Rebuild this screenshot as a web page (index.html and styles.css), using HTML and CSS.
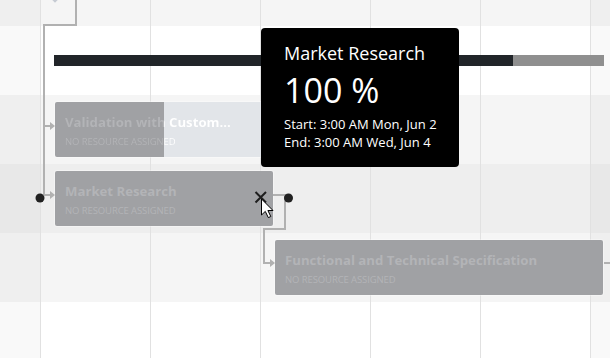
FILE: index.html
```html
<!DOCTYPE html>
<html>
<head>
<meta charset="utf-8">
<link rel="stylesheet" href="styles.css">
</head>
<body>
<div class="gantt">
  <div class="rows">
    <div class="row r-alt r-top"></div>
    <div class="row"></div>
    <div class="row r-alt"></div>
    <div class="row r-hover"></div>
    <div class="row r-alt"></div>
    <div class="row r-last"></div>
  </div>
  <div class="cols">
    <div class="col weekend w-left"></div>
    <div class="col"></div>
    <div class="col"></div>
    <div class="col"></div>
    <div class="col"></div>
    <div class="col"></div>
    <div class="col weekend w-right"></div>
  </div>

  <div class="milestone"></div>

  <div class="summary"><div class="summary-done" style="width:459px"></div></div>

  <div class="task t-validation partial" style="--p:109px">
    <div class="task-text">
      <div class="title">Validation with Custom...</div>
      <div class="res">NO RESOURCE ASSIGNED</div>
    </div>
  </div>

  <div class="task t-market">
    <div class="task-text">
      <div class="title">Market Research</div>
      <div class="res">NO RESOURCE ASSIGNED</div>
    </div>
  </div>

  <div class="task t-func">
    <div class="task-text">
      <div class="title">Functional and Technical Specification</div>
      <div class="res">NO RESOURCE ASSIGNED</div>
    </div>
  </div>

  <svg class="links" width="610" height="358" viewBox="0 0 610 358">
    <g fill="none" stroke="#b1b1b1" stroke-width="2">
      <path d="M76 0 V25 H44 V195"/>
      <path d="M44 126 H51"/>
      <path d="M44 195 H51"/>
      <path d="M273 195 H285 V229 H264 V263 H271"/>
      <path d="M604 263 H610"/>
    </g>
    <g fill="#b1b1b1">
      <path d="M50 122 L55 126 L50 130 Z"/>
      <path d="M50 191 L55 195 L50 199 Z"/>
      <path d="M270 259 L275 263 L270 267 Z"/>
    </g>
    <circle cx="40" cy="198" r="4.5" fill="#212121"/>
    <circle cx="288.5" cy="198" r="4.5" fill="#212121"/>
    <path d="M255.5 192 L266 202.5 M266 192 L255.5 202.5" stroke="#1e1e1e" stroke-width="2" fill="none"/>
    <path d="M261.5 199 V215 L265.3 211.4 L268.3 217.6 L270.8 216.5 L267.9 210.5 L273 210.5 Z" fill="#fff" stroke="#000" stroke-width="1" stroke-linejoin="round"/>
  </svg>

  <div class="tooltip">
    <div class="tt-title">Market Research</div>
    <div class="tt-pct">100 %</div>
    <div class="tt-line">Start: 3:00 AM Mon, Jun 2</div>
    <div class="tt-line">End: 3:00 AM Wed, Jun 4</div>
  </div>
</div>
</body>
</html>
```

FILE: styles.css
```css
html, body {
  margin: 0;
  padding: 0;
  background: #fff;
  overflow: hidden;
}
body {
  font-family: "Open Sans", "Noto Sans", sans-serif;
}
.gantt {
  position: relative;
  width: 610px;
  height: 358px;
  overflow: hidden;
}
.rows {
  display: flex;
  flex-direction: column;
  height: 100%;
}
.row {
  height: 69px;
  flex: none;
  background: #fff;
}
.row.r-top { height: 26px; }
.row.r-alt { background: #f5f5f5; }
.row.r-hover { background: #eeeeee; }
.row.r-last { flex: 1; }

.cols {
  position: absolute;
  inset: 0;
  display: flex;
}
.col {
  width: 110px;
  flex: none;
  border-left: 1px solid #e1e1e1;
  box-sizing: border-box;
}
.col.weekend { background: rgba(0,0,0,0.025); }
.col.w-left { width: 40px; border-left: none; }
.col.w-right { width: 20px; }

.milestone {
  position: absolute;
  left: 51px;
  top: -7px;
  width: 8px;
  height: 8px;
  background: #c6cbd3;
  transform: rotate(45deg);
}

.summary {
  position: absolute;
  left: 54px;
  top: 55px;
  width: 550px;
  height: 11px;
  background: #8f8f8f;
}
.summary-done {
  height: 100%;
  background: #212529;
}

.task {
  position: absolute;
  height: 55px;
  box-sizing: border-box;
  border-radius: 2px;
  background: #a0a1a4;
  overflow: hidden;
  box-shadow: 0 0 0 1px rgba(255,255,255,0.35);
}
.task.partial {
  background: linear-gradient(to right, #a0a1a4 var(--p), #e2e5e9 var(--p));
}
.t-validation { left: 55px; top: 102px; width: 260px; }
.t-market { left: 55px; top: 171px; width: 218px; }
.t-func { left: 275px; top: 240px; width: 328px; }

.task-text {
  padding: 12px 0 0 10px;
  white-space: nowrap;
  color: #b3b4b7;
}
.partial .task-text {
  color: transparent;
  background: linear-gradient(to right, #b3b4b7 var(--p), #ffffff var(--p));
  -webkit-background-clip: text;
  background-clip: text;
}
.title {
  font-weight: 700;
  font-size: 13.2px;
  line-height: 17px;
}
.res {
  font-size: 9.5px;
  line-height: 12px;
  margin-top: 5px;
  letter-spacing: -0.1px;
}

.links {
  position: absolute;
  left: 0;
  top: 0;
}

.tooltip {
  position: absolute;
  left: 261px;
  top: 28px;
  width: 198px;
  height: 139px;
  box-sizing: border-box;
  padding: 13px 0 0 23px;
  background: #000;
  border-radius: 4px;
  color: #fff;
}
.tt-title {
  font-size: 18px;
  line-height: 25px;
}
.tt-pct {
  font-size: 34px;
  line-height: 44px;
  margin-top: 2px;
}
.tt-line {
  font-size: 13px;
  line-height: 18px;
}
.tt-pct + .tt-line { margin-top: 3px; }
```
